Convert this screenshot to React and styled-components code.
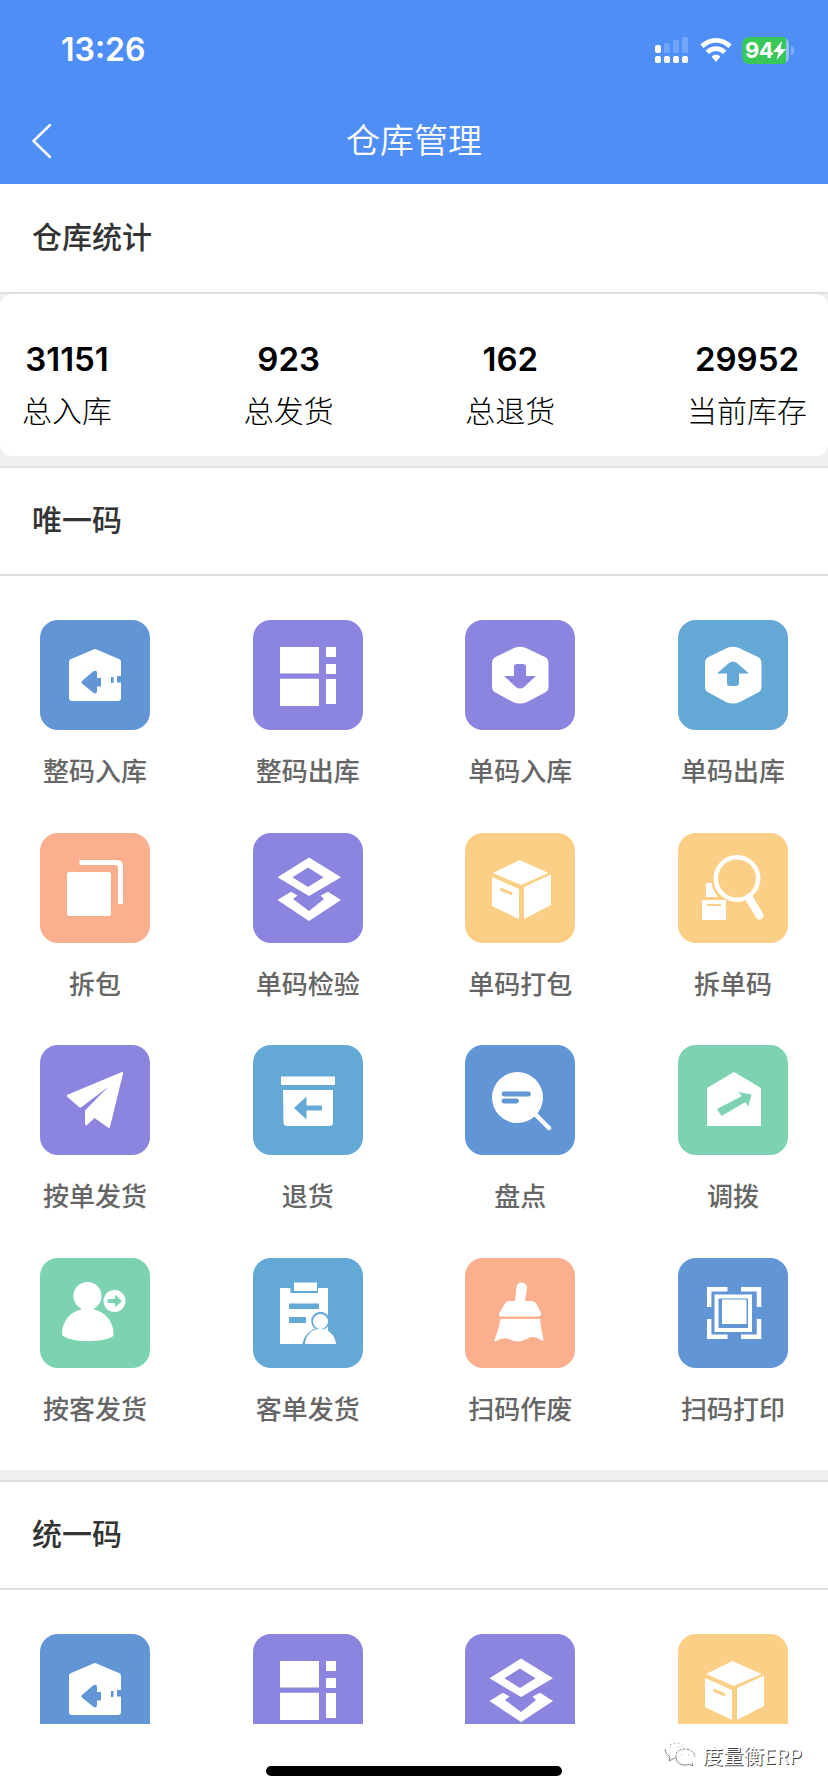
import React from 'react';
import styled, { createGlobalStyle } from 'styled-components';

const Global = createGlobalStyle`
  * { box-sizing: border-box; }
  body {
    margin: 0;
    background: #fff;
    font-family: Inter, "Noto Sans CJK SC", sans-serif;
  }
`;

const Screen = styled.main`
  width: 828px;
  height: 1792px;
  display: flex;
  flex-direction: column;
  overflow: hidden;
  background: #fff;
`;

const Header = styled.header`
  flex: none;
  height: 184px;
  background: #4f8ef5;
  color: #fff;
`;

const StatusBar = styled.div`
  display: flex;
  align-items: center;
  justify-content: space-between;
  height: 100px;
  padding: 0 34px 0 61px;
`;

const Clock = styled.time`
  font-size: 32px;
  font-weight: 600;
  line-height: 40px;
`;

const StatusIcons = styled.div`
  display: flex;
  align-items: center;
`;

const WifiGap = styled.span`
  display: flex;
  margin-left: 11px;
`;

const Battery = styled.div`
  display: flex;
  align-items: center;
  width: 47px;
  height: 27px;
  margin-left: 10px;
  padding-left: 3px;
  border-radius: 7px;
  background: linear-gradient(90deg, #38c759 44px, #8fc0ee 44px);
  font-size: 22px;
  font-weight: 700;
  letter-spacing: -0.5px;
`;

const Bolt = styled.svg`
  display: block;
  flex: none;
`;

const BatteryTip = styled.span`
  width: 3px;
  height: 9px;
  margin-left: 2px;
  border-radius: 0 4px 4px 0;
  background: #80aefa;
`;

const NavBar = styled.nav`
  display: grid;
  grid-template-columns: 100px 1fr 100px;
  align-items: center;
  height: 84px;
  padding-bottom: 2px;
`;

const BackIcon = styled.svg`
  display: block;
  margin: 0 0 0 31px;
`;

const PageTitle = styled.h1`
  margin: 0;
  text-align: center;
  font-size: 34px;
  font-weight: 350;
  line-height: 50px;
`;

const Content = styled.div`
  flex: none;
  height: 1540px;
  overflow: hidden;
  background: #efefef;
`;

const SectionTitle = styled.h2`
  display: flex;
  align-items: center;
  height: 110px;
  margin: 0;
  padding: 0 32px 6px;
  border-top: ${(p) => (p.$ruled ? '2px solid #dfdfdf' : 'none')};
  border-bottom: 2px solid #dfdfdf;
  background: #fff;
  color: #333;
  font-size: 30px;
  font-weight: 500;
`;

const StatsCard = styled.section`
  display: flex;
  justify-content: space-between;
  height: 162px;
  margin-bottom: 10px;
  padding: 44px 21px 0 22px;
  border-radius: 12px;
  background: #fff;
`;

const Stat = styled.div`
  display: flex;
  flex-direction: column;
  align-items: center;
  color: #000;
`;

const StatValue = styled.strong`
  font-size: 33px;
  font-weight: 600;
  line-height: 42px;
`;

const StatLabel = styled.span`
  margin-top: 9px;
  font-size: 30px;
  font-weight: 300;
  line-height: 44px;
`;

const Grid = styled.section`
  display: grid;
  grid-template-columns: repeat(4, 110px);
  grid-auto-rows: 212.67px;
  justify-content: space-between;
  height: ${(p) => p.$height}px;
  margin-bottom: 10px;
  padding: 44px 40px 0;
  background: #fff;
`;

const Entry = styled.div`
  display: flex;
  flex-direction: column;
  align-items: center;
`;

const Tile = styled.svg`
  display: block;
  flex: none;
  width: 110px;
  height: 110px;
  border-radius: 18px;
  background: ${(p) => p.$tone};
  color: ${(p) => p.$tone};
`;

const EntryLabel = styled.span`
  margin-top: 22px;
  color: #666;
  font-size: 26px;
  font-weight: 500;
  line-height: 40px;
  white-space: nowrap;
`;

const Footer = styled.footer`
  position: relative;
  flex: 1;
  display: flex;
  justify-content: center;
  align-items: flex-end;
  padding-bottom: 16px;
`;

const HomeBar = styled.div`
  width: 296px;
  height: 10px;
  border-radius: 5px;
  background: #000;
`;

const Watermark = styled.div`
  position: absolute;
  top: 15px;
  right: 26px;
  display: flex;
  align-items: center;
  gap: 5px;
  color: #fff;
  font-family: "Noto Sans CJK SC", sans-serif;
  font-size: 20.5px;
  font-weight: 400;
  line-height: 32px;
  text-shadow: 1px 1px 0 #444;
`;

const BLUE = '#6195d6';
const PURPLE = '#8c85df';
const SKY = '#64a8d6';
const PEACH = '#faaf8f';
const YELLOW = '#fbcf85';
const GREEN = '#7dd3b0';

const hexagon =
  'M49 28Q55 25.500 61 28L81 37.500Q83.500 39.500 83.500 43V67Q83.500 70.500 81 72L62 82Q55 85 48 82L29.500 72Q27 70.500 27 67V43Q27 39.500 29.500 37.500Z';

const glyphs = {
  warehouse: (
    <>
      <path fill="#fff" d="M54 29.300Q55 28.800 56 29.300L79.500 39.200Q81 40 81 42V78Q81 81 78 81H32Q29 81 29 78V42Q29 40 30.500 39.200Z" />
      <path fill="currentColor" d="M42 61L53 51.500Q57 49.500 57 53V58H61V66.500H57V71Q57 75 53 72.500L42 63.500Q40.500 62 42 61ZM71 57H73.500V63H71ZM77 56H82V62.500H77Z" />
    </>
  ),
  blocks: (
    <path fill="#fff" d="M27 27H66V53.500H27ZM27 58.700H66V86H27ZM73 27H83V37H73ZM73 44H83V54H73ZM73 59H83V84H73Z" />
  ),
  down: (
    <>
      <path fill="#fff" d={hexagon} />
      <path fill="currentColor" d="M52 44H58Q61 44 61 47V56H71L59 67Q55 70 51 67L39 56H49V47Q49 44 52 44Z" />
    </>
  ),
  up: (
    <>
      <path fill="#fff" d={hexagon} />
      <path fill="currentColor" d="M52 66H58Q61 66 61 63V53.500H71L59 43Q55 40 51 43L39 53.500H49V63Q49 66 52 66Z" />
    </>
  ),
  copy: (
    <>
      <rect x="27" y="39" width="44" height="44" rx="2.500" fill="#fff" />
      <path fill="#fff" d="M39.500 27H77Q83 27 83 33V69.500Q83 71 81.500 71H79.500Q78 71 78 69.500V35Q78 32 75 32H39.500Z" />
    </>
  ),
  layers: (
    <>
      <path fill="#fff" fillRule="evenodd" d="M56 24.500L88 44.300L56 63L24.500 44.300ZM55 34.500L39.500 44.300L55 54L70.500 44.300Z" />
      <path fill="#fff" d="M24.500 67L38 58.700L44.500 62.500L40 66L56 78L71 66L67.500 62.500L75 58.700L88 67L56 88Z" />
    </>
  ),
  box: (
    <>
      <path fill="#fff" d="M54.500 27L83.500 40L56 52L28 40ZM27 44L54 56V86L27 73ZM86 41.500V72L59 86V54Z" />
      <path stroke="currentColor" strokeWidth="3" strokeLinecap="round" fill="none" d="M36.500 56.500L46 60.500" />
    </>
  ),
  inspect: (
    <>
      <path fill="#fff" d="M28 50H34V53Q36 59 40 64H28Z" />
      <path fill="#fff" d="M24 67H48V87H24Z" />
      <path stroke="currentColor" strokeWidth="2" d="M29 72H43" />
      <circle cx="59" cy="45.500" r="21.200" fill="none" stroke="#fff" strokeWidth="4.500" />
      <path stroke="#fff" strokeWidth="8" strokeLinecap="round" d="M71 65L81.500 82.500" />
    </>
  ),
  plane: (
    <path fill="#fff" d="M82 27Q83.500 26.500 83 28.500L70 82Q69.500 84 68 82.500L54.500 73L47 80Q45 81 45 78.500V65.500L68 42L41 62.500Q40 63 39 62L27.500 52Q26 50.500 28 49.500Z" />
  ),
  returns: (
    <>
      <path fill="#fff" d="M28 31.500H82V40H28ZM30 45H80V77.500Q80 81 76.500 81H34Q30.500 81 30.500 77.500Z" />
      <path fill="currentColor" d="M41 63L53.500 51.500V60.500H68Q69 60.500 69 61.500V64.500Q69 65.500 68 65.500H53.500V74.500Z" />
    </>
  ),
  stocktake: (
    <>
      <circle cx="52.500" cy="52.500" r="25.500" fill="#fff" />
      <path stroke="#fff" strokeWidth="4.500" strokeLinecap="round" d="M69 68L84 83" />
      <path stroke="currentColor" strokeWidth="4.800" strokeLinecap="round" d="M39 49H63.500M39 56H51.500" />
    </>
  ),
  transfer: (
    <>
      <path fill="#fff" d="M56 27L83 43V81H29V43Z" />
      <path fill="currentColor" d="M39 64L64 51L60 47L73.500 49.500L70 61.500L67.500 57L43.500 71Z" />
    </>
  ),
  customer: (
    <>
      <circle cx="47.500" cy="38" r="14" fill="#fff" />
      <path fill="#fff" d="M41 50H54V51.500C65 54 73 63 73.500 75V78C68 82 58 83 47 83S27 81 22 77V74C23 63 30 54 41 51.500Z" />
      <circle cx="74.500" cy="43" r="11" fill="#fff" />
      <path fill="currentColor" d="M67.500 41H75V36.500L82 43L75 49.500V45H67.500Z" />
    </>
  ),
  clipboard: (
    <>
      <path fill="#fff" d="M28 30H37.500V35H65V30H74Q75 30 75 31V86H28Q27 86 27 85V31Q27 30 28 30ZM41 24.500H64V33H41Z" />
      <path fill="currentColor" d="M36 45.500H66V51H36ZM36 59H53V65H36Z" />
      <circle cx="67.500" cy="63" r="9.300" fill="currentColor" />
      <path fill="currentColor" d="M49.500 86C51 77 58 70 67 70L76 74V86Z" />
      <circle cx="67.500" cy="63.500" r="7.500" fill="#fff" />
      <path fill="#fff" d="M52 86C53 77 58 71 67 71S82 77 83 86Z" />
    </>
  ),
  broom: (
    <>
      <path fill="#fff" d="M51.500 29Q52 24.500 56.500 24.500T62 29L60 43H66Q70 43 72 47L76 55Q76.500 58.500 73 58.500H37Q33 58.500 34.500 55L39 47Q41 43 45 43H50Z" />
      <path fill="#fff" d="M35.500 61H75Q76 71 78.500 82Q78.500 83.500 76 82Q68 77 63 80.500Q52 86 44 81Q38 79 31 83Q29 83.500 29.500 82Q34 71 35.500 61Z" />
    </>
  ),
  scan: (
    <>
      <path fill="none" stroke="#fff" strokeWidth="4.500" d="M49.500 31.200H31.200V49M63 31.200H81V49M31.200 61V78.700H49.500M63 78.700H81V61" />
      <rect x="38.500" y="38.500" width="33.500" height="33.500" fill="none" stroke="#fff" strokeWidth="4" />
      <path fill="#fff" d="M44 41.500H68.500V66H44Z" />
    </>
  ),
};

const stats = [
  ['31151', '总入库'],
  ['923', '总发货'],
  ['162', '总退货'],
  ['29952', '当前库存'],
];

const uniqueCode = [
  ['整码入库', 'warehouse', BLUE],
  ['整码出库', 'blocks', PURPLE],
  ['单码入库', 'down', PURPLE],
  ['单码出库', 'up', SKY],
  ['拆包', 'copy', PEACH],
  ['单码检验', 'layers', PURPLE],
  ['单码打包', 'box', YELLOW],
  ['拆单码', 'inspect', YELLOW],
  ['按单发货', 'plane', PURPLE],
  ['退货', 'returns', SKY],
  ['盘点', 'stocktake', BLUE],
  ['调拨', 'transfer', GREEN],
  ['按客发货', 'customer', GREEN],
  ['客单发货', 'clipboard', SKY],
  ['扫码作废', 'broom', PEACH],
  ['扫码打印', 'scan', BLUE],
];

const unifiedCode = [
  [null, 'warehouse', BLUE],
  [null, 'blocks', PURPLE],
  [null, 'layers', PURPLE],
  [null, 'box', YELLOW],
];

function EntryGrid({ items, height }) {
  return (
    <Grid $height={height}>
      {items.map(([label, icon, tone]) => (
        <Entry key={icon}>
          <Tile viewBox="0 0 110 110" $tone={tone}>
            {glyphs[icon]}
          </Tile>
          {label && <EntryLabel>{label}</EntryLabel>}
        </Entry>
      ))}
    </Grid>
  );
}

function SignalIcon() {
  return (
    <svg width="34" height="28" viewBox="0 0 34 28" fill="#fff">
      <rect x="0" y="9" width="6" height="8" rx="2" />
      <g opacity=".2">
        <rect x="9" y="7" width="6" height="10" rx="1.500" />
        <rect x="18" y="4" width="6" height="13" rx="1.500" />
        <rect x="27" y="1" width="6" height="16" rx="1.500" />
      </g>
      {[0, 9, 18, 27].map((x) => (
        <rect key={x} x={x} y="20" width="6" height="7" rx="2" />
      ))}
    </svg>
  );
}

function WifiIcon() {
  return (
    <svg width="32" height="26" viewBox="0 0 32 26">
      <g fill="none" stroke="#fff" strokeWidth="4.800">
        <path d="M2 9.300C10 1.300 22 1.300 30 9.300" />
        <path d="M7.300 15.300C12.300 10.300 19.700 10.300 24.700 15.300" />
      </g>
      <path fill="#fff" d="M11.500 19.500C14 17 18 17 20.500 19.500L16 25Z" />
    </svg>
  );
}

function ChatLogo() {
  return (
    <svg width="34" height="28" viewBox="0 0 34 28" fill="none" stroke="#888" strokeWidth="1">
      <path strokeDasharray="2 2" stroke="#bbb" d="M7 4C11 1 18 1 21 7" />
      <path d="M12 17L6 20L7 16Q2 13 2 8" />
      <path strokeDasharray="3 1" d="M13 17C12 11 17 8 22 8C28 8 32 12 32 16" />
      <path d="M13 17C14 24 21 25 26 23.500L30 25L29 22" />
      <path stroke="#bbb" d="M7 6h1M15 6h1M18 14h1M25 14h1" />
    </svg>
  );
}

export default function App() {
  return (
    <>
      <Global />
      <Screen>
        <Header>
          <StatusBar>
            <Clock>13:26</Clock>
            <StatusIcons>
              <SignalIcon />
              <WifiGap>
                <WifiIcon />
              </WifiGap>
              <Battery>
                94
                <Bolt width="13" height="19" viewBox="0 0 13 19">
                  <path fill="#fff" d="M9 0L0 11H5.500L3.500 19L13 8H7.500Z" />
                </Bolt>
              </Battery>
              <BatteryTip />
            </StatusIcons>
          </StatusBar>
          <NavBar>
            <BackIcon width="22" height="36" viewBox="0 0 22 36">
              <path d="M19 2L2.500 18L19 34" fill="none" stroke="#fff" strokeWidth="2.500" strokeLinecap="round" strokeLinejoin="round" />
            </BackIcon>
            <PageTitle>仓库管理</PageTitle>
          </NavBar>
        </Header>
        <Content>
          <SectionTitle>仓库统计</SectionTitle>
          <StatsCard>
            {stats.map(([value, label]) => (
              <Stat key={label}>
                <StatValue>{value}</StatValue>
                <StatLabel>{label}</StatLabel>
              </Stat>
            ))}
          </StatsCard>
          <SectionTitle $ruled>唯一码</SectionTitle>
          <EntryGrid items={uniqueCode} height={894} />
          <SectionTitle $ruled>统一码</SectionTitle>
          <EntryGrid items={unifiedCode} height={134} />
        </Content>
        <Footer>
          <HomeBar />
          <Watermark>
            <ChatLogo />
            度量衡ERP
          </Watermark>
        </Footer>
      </Screen>
    </>
  );
}
